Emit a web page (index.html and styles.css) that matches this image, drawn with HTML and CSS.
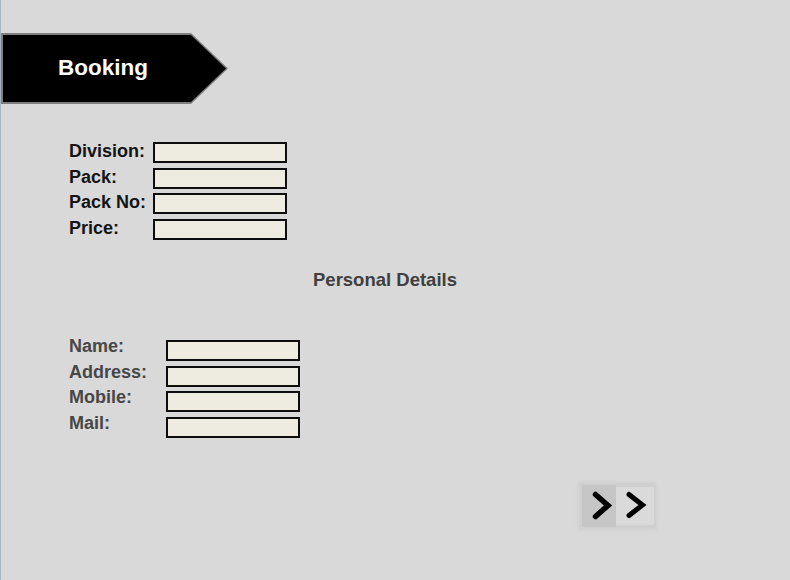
FILE: index.html
```html
<!DOCTYPE html>
<html>
<head>
<meta charset="utf-8">
<link rel="stylesheet" href="styles.css">
</head>
<body>
  <div class="banner"><div class="banner-inner"><span class="banner-text">Booking</span></div></div>

  <div class="form form-main">
    <span class="label">Division:</span><span class="field"></span>
    <span class="label">Pack:</span><span class="field"></span>
    <span class="label">Pack No:</span><span class="field"></span>
    <span class="label">Price:</span><span class="field"></span>
  </div>

  <div class="section-title">Personal Details</div>

  <div class="form form-personal">
    <span class="label">Name:</span><span class="field"></span>
    <span class="label">Address:</span><span class="field"></span>
    <span class="label">Mobile:</span><span class="field"></span>
    <span class="label">Mail:</span><span class="field"></span>
  </div>

  <div class="nav">
    <div class="nav-btn nav-btn-a">
      <svg width="34" height="42" viewBox="0 0 34 42"><polyline points="13.5,9.5 26,20.5 13.5,31.5" fill="none" stroke="#000" stroke-width="5.5" stroke-linecap="round" stroke-linejoin="miter"/></svg>
    </div>
    <div class="nav-btn nav-btn-b">
      <svg width="38" height="38" viewBox="0 0 38 38"><polyline points="13,7.5 26.5,18 13,28.5" fill="none" stroke="#000" stroke-width="5" stroke-linecap="round" stroke-linejoin="miter"/></svg>
    </div>
  </div>
</body>
</html>
```
FILE: styles.css
```css
html, body {
  margin: 0;
  padding: 0;
}
body {
  width: 789px;
  height: 580px;
  background: #d9d9d9;
  border-left: 1px solid #a9b2bf;
  padding-top: 33px;
  box-sizing: border-box;
  font-family: "Liberation Sans", Arial, sans-serif;
  font-weight: bold;
  overflow: hidden;
}
.banner {
  margin-left: -1px;
  width: 228px;
  height: 71px;
  background: #7f7f7f;
  clip-path: polygon(0 0, 191px 0, 228px 35.5px, 191px 71px, 0 71px);
  padding: 2px 0 2px 3px;
  box-sizing: border-box;
}
.banner-inner {
  height: 67px;
  background: #000;
  clip-path: polygon(0 0, 188px 0, 223px 33.5px, 188px 67px, 0 67px);
  display: flex;
  align-items: center;
  padding-left: 55px;
}
.banner-text {
  color: #fff;
  font-size: 22.5px;
  margin-top: -1px;
}
.form {
  display: grid;
  grid-auto-rows: 21px;
  row-gap: 4.67px;
  margin-left: 68px;
}
.form-main {
  grid-template-columns: 84px 134px;
  margin-top: 38px;
}
.form-personal {
  grid-template-columns: 97px 134px;
  margin-top: 51px;
}
.label {
  font-size: 18px;
  line-height: 19px;
  color: #141414;
  align-self: start;
  white-space: nowrap;
}
.form-personal .label {
  line-height: 13px;
  color: #474747;
}
.field {
  background: #eeece1;
  border: 2px solid #0d0d0d;
  box-sizing: border-box;
  height: 21px;
}
.section-title {
  margin-top: 30px;
  margin-left: 312px;
  font-size: 18.5px;
  line-height: 19px;
  color: #3f3f3f;
}
.nav {
  display: flex;
  align-items: center;
  width: max-content;
  margin-left: 579px;
  margin-top: 46px;
  background: #cfcfcf;
  padding: 1px 1px 1px 2px;
  box-shadow: 0 0 3px 2px #d0d0d0;
}
.nav-btn svg {
  display: block;
}
.nav-btn-a {
  background: #c6c6c6;
}
.nav-btn-b {
  background: #dadada;
}
```
